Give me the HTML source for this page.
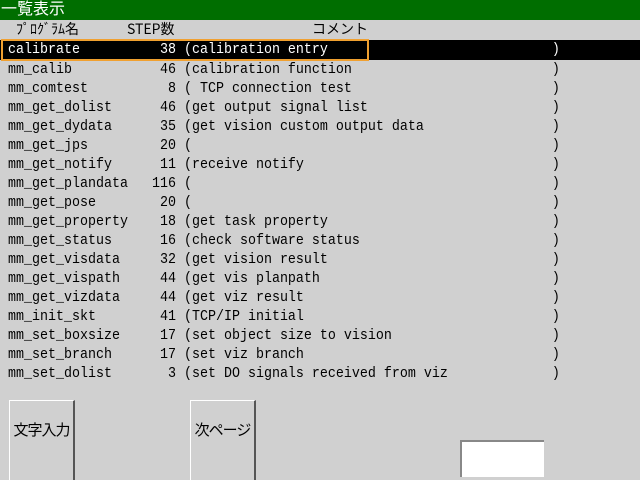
<!DOCTYPE html>
<html><head><meta charset="utf-8"><style>
html,body{margin:0;width:640px;height:480px;overflow:hidden}
body{background:#d0d0d0;position:relative;font-family:"Liberation Mono","Noto Sans CJK JP",monospace;}
.t{position:absolute;left:0;top:0;width:640px;height:20px;background:#006e00;color:#fff;font-family:"Liberation Sans","Noto Sans CJK JP",sans-serif;font-size:16px;line-height:20px;padding-left:1px;}
.h{position:absolute;top:20px;font-family:"Noto Sans CJK JP",sans-serif;font-size:14px;line-height:19px;color:#000}
.r{position:absolute;left:8px;margin:0;font-size:13.33px;line-height:16px;white-space:pre;color:#000;transform:scaleY(1.1);transform-origin:0 0}
.bar{position:absolute;left:0;top:40px;width:640px;height:20px;background:#000}
.sel{position:absolute;left:1px;top:39px;width:364px;height:18px;border:2px solid #f0a030}
.btn{position:absolute;top:400px;box-sizing:border-box;width:66px;height:80px;background:#d0d0d0;border-top:1px solid #fff;border-left:1px solid #fff;border-right:2px solid #555;font-family:"Noto Sans CJK JP",sans-serif;font-size:15px;letter-spacing:-1px;white-space:nowrap;padding-top:19px;line-height:20px;text-align:center}
.box{position:absolute;left:460px;top:440px;width:82px;height:35px;background:#fff;border-top:2px solid #888;border-left:2px solid #888}
</style></head><body>
<div class="t">一覧表示</div>
<div class="h" style="left:16px">ﾌﾟﾛｸﾞﾗﾑ名</div>
<div class="h" style="left:127px">STEP数</div>
<div class="h" style="left:312px">コメント</div>
<div class="bar"></div>
<div class="sel"></div>
<pre class="r" style="top:42px;color:#fff">calibrate          38 (calibration entry                            )</pre>
<pre class="r" style="top:62px">mm_calib           46 (calibration function                         )</pre>
<pre class="r" style="top:81px">mm_comtest          8 ( TCP connection test                         )</pre>
<pre class="r" style="top:100px">mm_get_dolist      46 (get output signal list                       )</pre>
<pre class="r" style="top:119px">mm_get_dydata      35 (get vision custom output data                )</pre>
<pre class="r" style="top:138px">mm_get_jps         20 (                                             )</pre>
<pre class="r" style="top:157px">mm_get_notify      11 (receive notify                               )</pre>
<pre class="r" style="top:176px">mm_get_plandata   116 (                                             )</pre>
<pre class="r" style="top:195px">mm_get_pose        20 (                                             )</pre>
<pre class="r" style="top:214px">mm_get_property    18 (get task property                            )</pre>
<pre class="r" style="top:233px">mm_get_status      16 (check software status                        )</pre>
<pre class="r" style="top:252px">mm_get_visdata     32 (get vision result                            )</pre>
<pre class="r" style="top:271px">mm_get_vispath     44 (get vis planpath                             )</pre>
<pre class="r" style="top:290px">mm_get_vizdata     44 (get viz result                               )</pre>
<pre class="r" style="top:309px">mm_init_skt        41 (TCP/IP initial                               )</pre>
<pre class="r" style="top:328px">mm_set_boxsize     17 (set object size to vision                    )</pre>
<pre class="r" style="top:347px">mm_set_branch      17 (set viz branch                               )</pre>
<pre class="r" style="top:366px">mm_set_dolist       3 (set DO signals received from viz             )</pre>
<div class="btn" style="left:9px">文字入力</div>
<div class="btn" style="left:190px">次ページ</div>
<div class="box"></div>
</body></html>
